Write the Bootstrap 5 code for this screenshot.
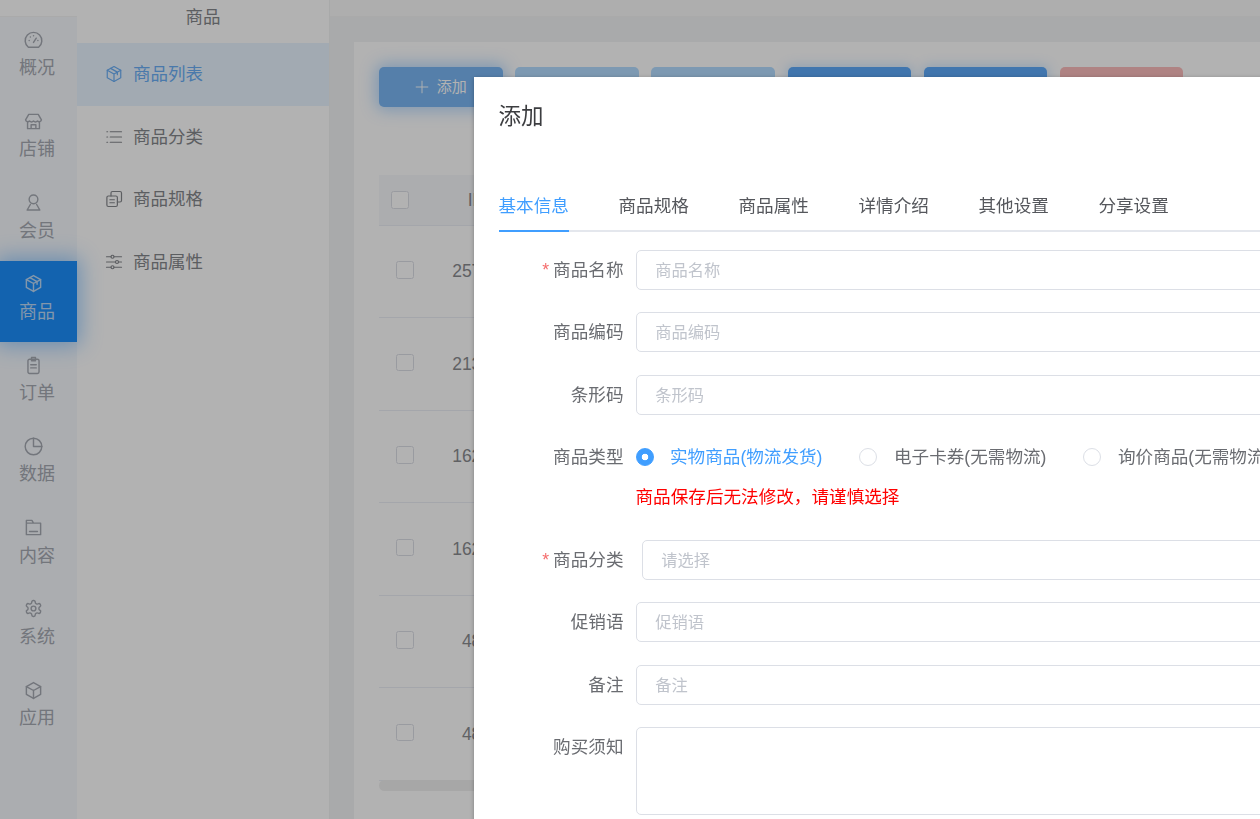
<!DOCTYPE html>
<html lang="zh-CN">
<head>
<meta charset="utf-8">
<title>商品列表</title>
<link href="https://cdn.jsdelivr.net/npm/bootstrap@5.3.0/dist/css/bootstrap.min.css" rel="stylesheet">
<style>
html,body{margin:0;height:100%;overflow:hidden}
body{font-family:"Liberation Sans","Noto Sans CJK SC",sans-serif;font-size:17.5px;color:#606266;background:#fff}
.stage{position:relative;width:1260px;height:819px;overflow:hidden}
.under{width:1260px;height:819px;align-items:stretch}
.ico{width:19px;height:19px;fill:none;stroke:currentColor;stroke-width:1.6;stroke-linecap:round;stroke-linejoin:round;flex:none}
/* primary rail */
.rail{width:77px;flex:none;background:#f5f8fc;color:#a5a9b2;position:relative;z-index:2}
.rail-top{height:17px;background:#fff;border-bottom:1px solid #f4f4f4}
.rail-item{height:81.25px;padding:13.5px 3px 0 0;font-size:18px}
.rail-item .ico{margin-right:8px;stroke-width:1.8}
.rail-item span{line-height:27px;margin-top:5.5px}
.rail-on{background:#1c8ffb;color:#bcd8f5;box-shadow:0 0 20px 3px rgba(30,144,255,.45)}
/* secondary rail */
.subrail{width:253px;flex:none;background:#fff;color:#85878c;border-right:1px solid #f1f2f3}
.subrail-title{height:43px;line-height:34px;text-align:center}
.sub-item{height:62.5px;padding-left:28px;gap:10px}
.sub-item .ico{width:18px;height:18px}
.sub-on{background:#e9f4ff;color:#6aaef5}
/* main */
.main-area{flex:1;min-width:0;background:#f2f4f5}
.main-top{height:17px;background:#fafafa;border-bottom:1px solid #f4f4f4}
.main-wrap{padding:25px 0 0 24px;height:802px}
.main-card{background:#fff;height:100%;padding:25px}
.tool-row{gap:12.7px;margin-bottom:68px}
.tool-btn{width:123.5px;height:40px;border:0;border-radius:5px;padding:0;color:#fff;font-size:15px;gap:8px}
.tone-a{background:#7ab6f4;box-shadow:0 0 16px 3px rgba(64,158,255,.4)}
.tone-b{background:#b3dcff}
.tone-c{background:#5eaaf9;box-shadow:0 0 12px 2px rgba(64,158,255,.25)}
.tone-d{background:#fbbcbc}
.plus-ico{width:14px;height:14px}
.data-tbl{width:100%;margin:0;color:#8a8c90;--bs-table-bg:transparent;border-collapse:collapse;table-layout:fixed}
.data-tbl th,.data-tbl td{border-bottom:1px solid #ebeef5;padding:0;font-weight:400;vertical-align:middle;background:transparent;box-shadow:none}
.data-tbl thead th{height:50px;background:#f7f8fb}
.data-tbl tbody td{height:92.5px}
.col-sel{width:51px}
.col-id{width:93px;text-align:center}
.head-check{margin-left:12px}
.row-check{margin-left:17px;margin-bottom:3px}
.form-check-input.tbl-check{width:17.5px;height:17.5px;border:1px solid #dcdfe6;border-radius:2.5px;margin-top:0;background:#fff;display:block}
.hscroll{height:11px;border-radius:6px;background:#f0f0f0;margin-top:-1px}
/* overlay and dialog */
.veil{position:absolute;inset:0;background:rgba(0,0,0,.3);backdrop-filter:blur(.5px);z-index:5}
.dialog-box{position:absolute;left:474px;top:77px;width:1000px;height:900px;background:#fff;z-index:6;padding:26px 25px 25px 24.5px;box-shadow:0 1px 4px rgba(0,0,0,.3);font-size:17.6px}
.dialog-title{font-size:22.5px;line-height:28px;color:#3c3d40;margin-bottom:51px}
.tab-bar{border-bottom:2.5px solid #e4e7ed;height:50px;gap:49.6px;margin-bottom:17.5px}
.tab-link{height:50px;line-height:49px;color:#55575c;text-decoration:none;padding:0}
.tab-on{color:#409eff;border-bottom:2.5px solid #409eff}
.field{margin-bottom:22.5px;min-height:40px}
.field-tight{margin-bottom:0}
.field-label{width:125px;flex:none;text-align:right;line-height:40px;margin-right:12px;color:#6a6c71}
.req{color:#f56c6c;margin-right:4px}
.text-in{height:40px;border:1px solid #dcdfe6;border-radius:5px;padding:1px 18.75px 0;font-size:16.25px;color:#606266;box-shadow:none;font-family:inherit}
.text-in::placeholder{color:#c0c4cc;opacity:1}
.shift-in{margin-left:6px}
.area-in{height:87.5px;padding:10px 18.75px}
.pick-row{gap:37px;height:40px;white-space:nowrap}
.form-check.pick{gap:16.5px;margin:0;color:#6a6c71;padding:0;min-height:0}
.form-check.pick-on{color:#409eff}
.form-check.pick .form-check-input{width:18px;height:18px;margin:0;border:1px solid #dcdfe6;float:none;background:#fff;flex:none}
.form-check.pick .form-check-input:checked{border-color:#409eff;background:radial-gradient(circle,#fff 0 3px,#409eff 3.6px)}
.warn-line{line-height:40px;color:#f00}
</style>
</head>
<body>
<div class="stage">
  <div class="under d-flex">
    <nav class="rail d-flex flex-column">
      <div class="rail-top"></div>
      <div class="rail-item d-flex flex-column align-items-center"><svg class="ico" viewBox="0 0 24 24"><path d="M5.500 20.500A10.500 10.500 0 1 1 18.500 20.500Z"/><path d="M12 14.500l3.500-5.500M6.500 12h.1M17.500 12h.1M8 7.500h.1M12 6h.1"/></svg><span>概况</span></div>
      <div class="rail-item d-flex flex-column align-items-center"><svg class="ico" viewBox="0 0 24 24"><path d="M6 3h12l4 7a3 3 0 0 1-5 1.500 3.500 3.500 0 0 1-5 0 3.500 3.500 0 0 1-5 0A3 3 0 0 1 2 10z"/><path d="M4.500 13v8h15v-8M9 21v-5h6v5"/></svg><span>店铺</span></div>
      <div class="rail-item d-flex flex-column align-items-center"><svg class="ico" viewBox="0 0 24 24"><circle cx="12" cy="8" r="5.500"/><path d="M8 14.500L4 21.500h16l-4-7"/></svg><span>会员</span></div>
      <div class="rail-item rail-on d-flex flex-column align-items-center"><svg class="ico" viewBox="0 0 24 24"><path d="M12 2l9 5v10l-9 5-9-5V7z"/><path d="M3 7l9 5 9-5M12 12v10M7.500 4.500l9 5v3.500"/></svg><span>商品</span></div>
      <div class="rail-item d-flex flex-column align-items-center"><svg class="ico" viewBox="0 0 24 24"><rect x="5" y="4" width="14" height="18" rx="2"/><path d="M9.500 2h5v4h-5zM8.500 11h7M8.500 15h7"/></svg><span>订单</span></div>
      <div class="rail-item d-flex flex-column align-items-center"><svg class="ico" viewBox="0 0 24 24"><circle cx="12" cy="12" r="10.500"/><path d="M12 1.500V12h10.500"/></svg><span>数据</span></div>
      <div class="rail-item d-flex flex-column align-items-center"><svg class="ico" viewBox="0 0 24 24"><path d="M3 3h7l2 3.500h9V21H3zM3 6.500h9M7 17h10"/></svg><span>内容</span></div>
      <div class="rail-item d-flex flex-column align-items-center"><svg class="ico" viewBox="0 0 24 24"><path d="M12.220 2h-.44a2 2 0 0 0-2 2v.18a2 2 0 0 1-1 1.730l-.43.25a2 2 0 0 1-2 0l-.15-.08a2 2 0 0 0-2.730.73l-.22.38a2 2 0 0 0 .73 2.730l.15.1a2 2 0 0 1 1 1.720v.51a2 2 0 0 1-1 1.740l-.15.09a2 2 0 0 0-.73 2.730l.22.38a2 2 0 0 0 2.730.73l.15-.08a2 2 0 0 1 2 0l.43.25a2 2 0 0 1 1 1.730V20a2 2 0 0 0 2 2h.44a2 2 0 0 0 2-2v-.18a2 2 0 0 1 1-1.730l.43-.25a2 2 0 0 1 2 0l.15.08a2 2 0 0 0 2.730-.73l.22-.39a2 2 0 0 0-.73-2.730l-.15-.08a2 2 0 0 1-1-1.740v-.5a2 2 0 0 1 1-1.740l.15-.09a2 2 0 0 0 .73-2.730l-.22-.38a2 2 0 0 0-2.730-.73l-.15.08a2 2 0 0 1-2 0l-.43-.25a2 2 0 0 1-1-1.730V4a2 2 0 0 0-2-2z"/><circle cx="12" cy="12" r="3"/></svg><span>系统</span></div>
      <div class="rail-item d-flex flex-column align-items-center"><svg class="ico" viewBox="0 0 24 24"><path d="M12 2l9 5v10l-9 5-9-5V7z"/><path d="M3 7l9 5 9-5M12 12v10"/></svg><span>应用</span></div>
    </nav>
    <aside class="subrail">
      <div class="subrail-title">商品</div>
      <div class="sub-item sub-on d-flex align-items-center"><svg class="ico" viewBox="0 0 24 24"><path d="M12 2l9 5v10l-9 5-9-5V7z"/><path d="M3 7l9 5 9-5M12 12v10M7.500 4.500l9 5v3.500"/></svg><span>商品列表</span></div>
      <div class="sub-item d-flex align-items-center"><svg class="ico" viewBox="0 0 24 24"><path d="M2.500 5h1M7 5h15M2.500 12h1M7 12h15M2.500 19h1M7 19h15"/></svg><span>商品分类</span></div>
      <div class="sub-item d-flex align-items-center"><svg class="ico" viewBox="0 0 24 24"><rect x="2.500" y="8" width="14" height="14" rx="2"/><path d="M8 8V4a2 2 0 0 1 2-2h10a2 2 0 0 1 2 2v10a2 2 0 0 1-2 2h-3.500M6.500 13h6M6.500 17h6"/></svg><span>商品规格</span></div>
      <div class="sub-item d-flex align-items-center"><svg class="ico" viewBox="0 0 24 24"><path d="M2 5h6M12 5h10M2 12h12M18 12h4M2 19h6M12 19h10"/><circle cx="10" cy="5" r="2"/><circle cx="16" cy="12" r="2"/><circle cx="10" cy="19" r="2"/></svg><span>商品属性</span></div>
    </aside>
    <main class="main-area">
      <div class="main-top"></div>
      <div class="main-wrap">
        <div class="main-card">
          <div class="tool-row d-flex">
            <button type="button" class="tool-btn tone-a d-flex align-items-center justify-content-center"><svg class="ico plus-ico" viewBox="0 0 24 24"><path d="M12 2v20M2 12h20"/></svg><span>添加</span></button>
            <button type="button" class="tool-btn tone-b"></button>
            <button type="button" class="tool-btn tone-b"></button>
            <button type="button" class="tool-btn tone-c"></button>
            <button type="button" class="tool-btn tone-c"></button>
            <button type="button" class="tool-btn tone-d"></button>
          </div>
          <table class="table data-tbl">
            <thead><tr><th class="col-sel"><input class="form-check-input tbl-check head-check" type="checkbox" aria-label="全选"></th><th class="col-id">ID</th><th></th></tr></thead>
            <tbody>
              <tr><td><input class="form-check-input tbl-check row-check" type="checkbox" aria-label="选择"></td><td class="col-id">25701</td><td></td></tr>
              <tr><td><input class="form-check-input tbl-check row-check" type="checkbox" aria-label="选择"></td><td class="col-id">21301</td><td></td></tr>
              <tr><td><input class="form-check-input tbl-check row-check" type="checkbox" aria-label="选择"></td><td class="col-id">16201</td><td></td></tr>
              <tr><td><input class="form-check-input tbl-check row-check" type="checkbox" aria-label="选择"></td><td class="col-id">16200</td><td></td></tr>
              <tr><td><input class="form-check-input tbl-check row-check" type="checkbox" aria-label="选择"></td><td class="col-id">481</td><td></td></tr>
              <tr><td><input class="form-check-input tbl-check row-check" type="checkbox" aria-label="选择"></td><td class="col-id">480</td><td></td></tr>
            </tbody>
          </table>
          <div class="hscroll"></div>
        </div>
      </div>
    </main>
  </div>
  <div class="veil"></div>
  <div class="dialog-box">
    <div class="dialog-title">添加</div>
    <div class="nav tab-bar">
      <a class="tab-link tab-on" href="#">基本信息</a>
      <a class="tab-link" href="#">商品规格</a>
      <a class="tab-link" href="#">商品属性</a>
      <a class="tab-link" href="#">详情介绍</a>
      <a class="tab-link" href="#">其他设置</a>
      <a class="tab-link" href="#">分享设置</a>
    </div>
    <form>
      <div class="field d-flex"><label class="field-label"><span class="req">*</span>商品名称</label><input class="form-control text-in" placeholder="商品名称"></div>
      <div class="field d-flex"><label class="field-label">商品编码</label><input class="form-control text-in" placeholder="商品编码"></div>
      <div class="field d-flex"><label class="field-label">条形码</label><input class="form-control text-in" placeholder="条形码"></div>
      <div class="field field-tight d-flex"><label class="field-label">商品类型</label>
        <div class="pick-row d-flex align-items-center">
          <label class="pick pick-on form-check d-flex align-items-center"><input class="form-check-input" type="radio" name="ptype" checked>实物商品(物流发货)</label>
          <label class="pick form-check d-flex align-items-center"><input class="form-check-input" type="radio" name="ptype">电子卡券(无需物流)</label>
          <label class="pick form-check d-flex align-items-center"><input class="form-check-input" type="radio" name="ptype">询价商品(无需物流)</label>
        </div>
      </div>
      <div class="field d-flex"><div class="field-label"></div><div class="warn-line">商品保存后无法修改，请谨慎选择</div></div>
      <div class="field d-flex"><label class="field-label"><span class="req">*</span>商品分类</label><input class="form-control text-in shift-in" placeholder="请选择"></div>
      <div class="field d-flex"><label class="field-label">促销语</label><input class="form-control text-in" placeholder="促销语"></div>
      <div class="field d-flex"><label class="field-label">备注</label><input class="form-control text-in" placeholder="备注"></div>
      <div class="field d-flex"><label class="field-label">购买须知</label><textarea class="form-control text-in area-in"></textarea></div>
    </form>
  </div>
</div>
<script src="https://cdn.jsdelivr.net/npm/bootstrap@5.3.0/dist/js/bootstrap.bundle.min.js"></script>
</body>
</html>
